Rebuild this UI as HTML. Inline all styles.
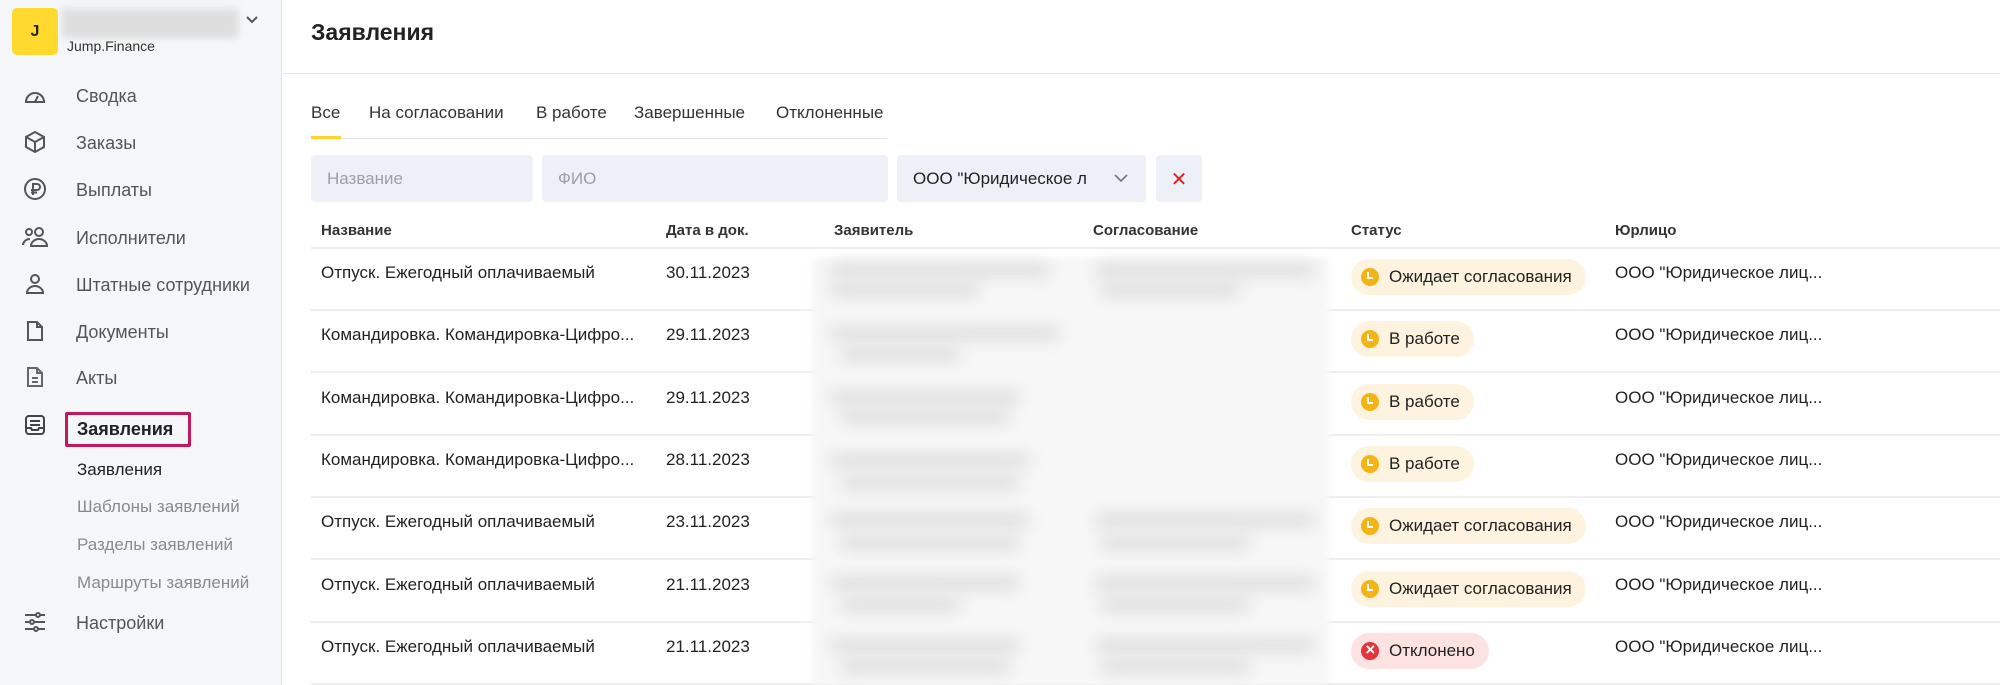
<!DOCTYPE html>
<html><head><meta charset="utf-8"><style>
*{box-sizing:border-box;margin:0;padding:0}
body{width:2000px;height:685px;overflow:hidden;background:#fff;font-family:"Liberation Sans","Noto Sans CJK SC",sans-serif;color:#222;position:relative}
.abs{position:absolute}
.side{left:0;top:0;width:282px;height:685px;background:#f5f6f8;border-right:1px solid #e6e7ea}
.mi{position:absolute;left:76px;font-size:18px;color:#555;line-height:22px}
.ic{position:absolute;left:23px;width:24px;height:24px}
.sub{position:absolute;left:77px;font-size:17px;color:#8a8a8a;line-height:20px}
.tab{position:absolute;top:103px;font-size:17px;color:#333}
.inp{position:absolute;top:155px;height:47px;background:#edf1f7;border-radius:4px;font-size:17px;color:#9aa0a8;padding:14px 16px}
.th{position:absolute;top:222px;font-size:15px;color:#333;font-weight:bold}
.line{position:absolute;left:311px;right:0;height:2px;background:#eeeeee}
.td{position:absolute;font-size:17px;color:#222}
.badge{position:absolute;left:1351px;height:36px;border-radius:18px;background:#fdf3de;font-size:17px;color:#222;padding:8px 14px 0 38px;line-height:20px}
.badge i{position:absolute;left:10px;top:9px;width:18px;height:18px;border-radius:50%;background:#f5b415}
.badge i:after{content:"";position:absolute;left:6px;top:4px;width:4px;height:5px;border-left:2px solid #fff;border-bottom:2px solid #fff}
.red{background:#fde2e2}
.red i{background:#e8323c}
.red i:after{content:"×";border:0;color:#fff;font-size:17px;font-weight:bold;left:4px;top:-2px;width:auto;height:auto}
.blur{position:absolute;background:#d4d4d4;height:10px;border-radius:5px;filter:blur(8px)}
</style></head><body>
<div class="abs side">
 <div class="abs" style="left:12px;top:8px;width:46px;height:47px;background:#ffd92e;border-radius:5px;font-size:16px;font-weight:bold;text-align:center;line-height:47px;color:#222">J</div>
 <div class="abs" style="left:62px;top:9px;width:176px;height:29px;background:#ddd;filter:blur(4px)"></div>
 <svg class="abs" style="left:244px;top:14px" width="16" height="12"><path d="M3 3l5 5 5-5" stroke="#555" stroke-width="2" fill="none"/></svg>
 <div class="abs" style="left:67px;top:38px;font-size:14px;color:#333">Jump.Finance</div>

 <svg class="ic" style="top:83px" viewBox="0 0 24 24" fill="none" stroke="#555" stroke-width="2"><path d="M3 19a9 9 0 1 1 18 0z"/><path d="M12 19l3-6"/></svg>
 <div class="mi" style="top:85px">Сводка</div>
 <svg class="ic" style="top:130px" viewBox="0 0 24 24" fill="none" stroke="#555" stroke-width="2"><path d="M12 2l9 5v10l-9 5-9-5V7z"/><path d="M3 7l9 5 9-5M12 12v10"/></svg>
 <div class="mi" style="top:132px">Заказы</div>
 <svg class="ic" style="top:177px" viewBox="0 0 24 24" fill="none" stroke="#555" stroke-width="2"><circle cx="12" cy="12" r="10"/><path d="M10 18V7h4a3 3 0 0 1 0 6H8M8 15.5h6"/></svg>
 <div class="mi" style="top:179px">Выплаты</div>
 <svg class="ic" style="top:225px;left:21px;width:28px" viewBox="0 0 28 24" fill="none" stroke="#555" stroke-width="2"><circle cx="8" cy="7" r="3"/><circle cx="18" cy="7" r="4"/><path d="M10 21c0-4 4-7 8-7s8 3 8 7zM2 20c0-3 3-6 7-6"/></svg>
 <div class="mi" style="top:227px">Исполнители</div>
 <svg class="ic" style="top:272px" viewBox="0 0 24 24" fill="none" stroke="#555" stroke-width="2"><circle cx="12" cy="7" r="4"/><path d="M4 21c0-4 4-7 8-7s8 3 8 7z"/></svg>
 <div class="mi" style="top:274px">Штатные сотрудники</div>
 <svg class="ic" style="top:319px" viewBox="0 0 24 24" fill="none" stroke="#555" stroke-width="2"><path d="M5 3h9l5 5v13H5zM14 3v5h5"/></svg>
 <div class="mi" style="top:321px">Документы</div>
 <svg class="ic" style="top:365px" viewBox="0 0 24 24" fill="none" stroke="#666" stroke-width="2"><path d="M5 3h9l5 5v13H5zM14 3v5h5M9 13h6M9 17h6"/></svg>
 <div class="mi" style="top:367px">Акты</div>
 <svg class="ic" style="top:413px" viewBox="0 0 24 24" fill="none" stroke="#444" stroke-width="2"><rect x="3" y="3" width="18" height="18" rx="3"/><path d="M7 8h10M7 12h10M3 15h5l1 2h6l1-2h5"/></svg>
 <div class="abs" style="left:65px;top:412px;width:126px;height:35px;border:3px solid #c2185b;border-radius:2px"></div>
 <div class="mi" style="top:418px;color:#222;font-weight:bold;left:77px">Заявления</div>
 <div class="sub" style="top:460px;color:#222">Заявления</div>
 <div class="sub" style="top:497px">Шаблоны заявлений</div>
 <div class="sub" style="top:535px">Разделы заявлений</div>
 <div class="sub" style="top:573px">Маршруты заявлений</div>
 <svg class="ic" style="top:610px" viewBox="0 0 24 24" fill="none" stroke="#555" stroke-width="2"><path d="M2 5h20M2 12h20M2 19h20"/><circle cx="15" cy="5" r="2" fill="#f5f6f8"/><circle cx="9" cy="12" r="2" fill="#f5f6f8"/><circle cx="13" cy="19" r="2" fill="#f5f6f8"/></svg>
 <div class="mi" style="top:612px">Настройки</div>
</div>

<div class="abs" style="left:311px;top:19px;font-size:23px;font-weight:bold;color:#222">Заявления</div>
<div class="abs" style="left:283px;top:73px;right:0;height:1px;background:#e6e6e6"></div>

<div class="tab" style="left:311px">Все</div>
<div class="tab" style="left:369px">На согласовании</div>
<div class="tab" style="left:536px">В работе</div>
<div class="tab" style="left:634px">Завершенные</div>
<div class="tab" style="left:776px">Отклоненные</div>
<div class="abs" style="left:311px;top:138px;width:576px;height:1px;background:#e2e2e2"></div>
<div class="abs" style="left:311px;top:136px;width:30px;height:3px;background:#ffd22e"></div>

<div class="inp" style="left:311px;width:222px">Название</div>
<div class="inp" style="left:542px;width:346px">ФИО</div>
<div class="inp" style="left:897px;width:249px;color:#222">ООО "Юридическое л</div>
<svg class="abs" style="left:1113px;top:171px" width="16" height="14"><path d="M2 4l6 6 6-6" stroke="#777" stroke-width="1.6" fill="none"/></svg>
<div class="inp" style="left:1156px;width:46px;padding:12px 0;text-align:center;color:#e02020;font-size:20px">✕</div>

<div class="th" style="left:321px">Название</div>
<div class="th" style="left:666px">Дата в док.</div>
<div class="th" style="left:834px">Заявитель</div>
<div class="th" style="left:1093px">Согласование</div>
<div class="th" style="left:1351px">Статус</div>
<div class="th" style="left:1615px">Юрлицо</div>

<div class="line" style="top:247px"></div>
<div class="line" style="top:309px"></div>
<div class="line" style="top:371px"></div>
<div class="line" style="top:434px"></div>
<div class="line" style="top:496px"></div>
<div class="line" style="top:558px"></div>
<div class="line" style="top:621px"></div>
<div class="line" style="top:683px"></div>

<div class="abs" style="left:812px;top:258px;width:517px;height:427px;background:#f7f7f7;filter:blur(3px)"></div>
<div class="blur" style="left:830px;top:265px;width:220px"></div>
<div class="blur" style="left:830px;top:285px;width:150px"></div>
<div class="blur" style="left:1095px;top:265px;width:220px"></div>
<div class="blur" style="left:1100px;top:285px;width:140px"></div>
<div class="blur" style="left:830px;top:328px;width:230px"></div>
<div class="blur" style="left:840px;top:350px;width:120px"></div>
<div class="blur" style="left:830px;top:392px;width:190px"></div>
<div class="blur" style="left:840px;top:412px;width:170px"></div>
<div class="blur" style="left:830px;top:455px;width:200px"></div>
<div class="blur" style="left:840px;top:478px;width:180px"></div>
<div class="blur" style="left:830px;top:515px;width:200px"></div>
<div class="blur" style="left:840px;top:538px;width:180px"></div>
<div class="blur" style="left:1095px;top:515px;width:220px"></div>
<div class="blur" style="left:1100px;top:538px;width:150px"></div>
<div class="blur" style="left:830px;top:578px;width:190px"></div>
<div class="blur" style="left:840px;top:600px;width:120px"></div>
<div class="blur" style="left:1095px;top:578px;width:220px"></div>
<div class="blur" style="left:1100px;top:600px;width:150px"></div>
<div class="blur" style="left:830px;top:640px;width:190px"></div>
<div class="blur" style="left:840px;top:662px;width:170px"></div>
<div class="blur" style="left:1095px;top:640px;width:220px"></div>
<div class="blur" style="left:1100px;top:662px;width:150px"></div>

<div class="td" style="left:321px;top:263px">Отпуск. Ежегодный оплачиваемый</div>
<div class="td" style="left:666px;top:263px">30.11.2023</div>
<div class="badge" style="top:259px">Ожидает согласования<i></i></div>
<div class="td" style="left:1615px;top:263px">ООО "Юридическое лиц...</div>

<div class="td" style="left:321px;top:325px">Командировка. Командировка-Цифро...</div>
<div class="td" style="left:666px;top:325px">29.11.2023</div>
<div class="badge" style="top:321px">В работе<i></i></div>
<div class="td" style="left:1615px;top:325px">ООО "Юридическое лиц...</div>

<div class="td" style="left:321px;top:388px">Командировка. Командировка-Цифро...</div>
<div class="td" style="left:666px;top:388px">29.11.2023</div>
<div class="badge" style="top:384px">В работе<i></i></div>
<div class="td" style="left:1615px;top:388px">ООО "Юридическое лиц...</div>

<div class="td" style="left:321px;top:450px">Командировка. Командировка-Цифро...</div>
<div class="td" style="left:666px;top:450px">28.11.2023</div>
<div class="badge" style="top:446px">В работе<i></i></div>
<div class="td" style="left:1615px;top:450px">ООО "Юридическое лиц...</div>

<div class="td" style="left:321px;top:512px">Отпуск. Ежегодный оплачиваемый</div>
<div class="td" style="left:666px;top:512px">23.11.2023</div>
<div class="badge" style="top:508px">Ожидает согласования<i></i></div>
<div class="td" style="left:1615px;top:512px">ООО "Юридическое лиц...</div>

<div class="td" style="left:321px;top:575px">Отпуск. Ежегодный оплачиваемый</div>
<div class="td" style="left:666px;top:575px">21.11.2023</div>
<div class="badge" style="top:571px">Ожидает согласования<i></i></div>
<div class="td" style="left:1615px;top:575px">ООО "Юридическое лиц...</div>

<div class="td" style="left:321px;top:637px">Отпуск. Ежегодный оплачиваемый</div>
<div class="td" style="left:666px;top:637px">21.11.2023</div>
<div class="badge red" style="top:633px">Отклонено<i></i></div>
<div class="td" style="left:1615px;top:637px">ООО "Юридическое лиц...</div>
</body></html>
